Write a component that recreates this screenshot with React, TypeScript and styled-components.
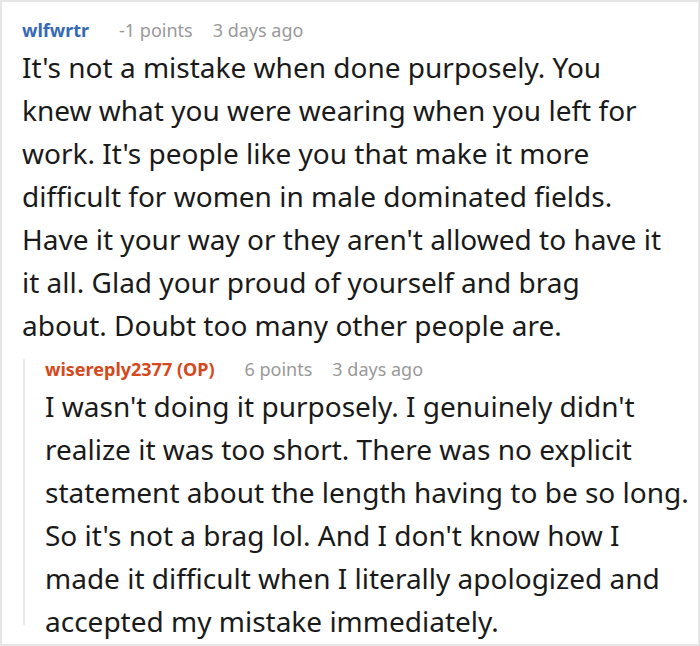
import styled, { createGlobalStyle } from 'styled-components'

const GlobalStyle = createGlobalStyle`
	html, body {
		margin: 0;
		padding: 0;
		background: #ffffff;
	}
	body {
		font-family: 'Noto Sans', 'Open Sans', sans-serif;
	}
`

type CommentData = {
	author: string
	points: string
	time: string
	op?: boolean
	lines: string[]
}

const parent: CommentData = {
	author: 'wlfwrtr',
	points: '-1 points',
	time: '3 days ago',
	lines: [
		"It's not a mistake when done purposely. You",
		'knew what you were wearing when you left for',
		"work. It's people like you that make it more",
		'difficult for women in male dominated fields.',
		"Have it your way or they aren't allowed to have it",
		'it all. Glad your proud of yourself and brag',
		'about. Doubt too many other people are.',
	],
}

const reply: CommentData = {
	author: 'wisereply2377 (OP)',
	points: '6 points',
	time: '3 days ago',
	op: true,
	lines: [
		"I wasn't doing it purposely. I genuinely didn't",
		'realize it was too short. There was no explicit',
		'statement about the length having to be so long.',
		"So it's not a brag lol. And I don't know how I",
		'made it difficult when I literally apologized and',
		'accepted my mistake immediately.',
	],
}

const Comment = ({ data }: { data: CommentData }) => (
	<>
		<StylesMeta>
			<StylesAuthor $op={data.op}>{data.author}</StylesAuthor>
			<StylesInfo>{data.points}</StylesInfo>
			<StylesInfo>{data.time}</StylesInfo>
		</StylesMeta>
		<StylesBody>
			{data.lines.map((line) => (
				<StylesLine key={line}>{line}</StylesLine>
			))}
		</StylesBody>
	</>
)

export default function App() {
	return (
		<>
			<GlobalStyle />
			<StylesFrame>
				<Comment data={parent} />
				<StylesReply>
					<Comment data={reply} />
				</StylesReply>
			</StylesFrame>
		</>
	)
}

const StylesFrame = styled.section`
	box-sizing: border-box;
	width: 700px;
	height: 646px;
	border: 2px solid #e6e6e6;
	padding: 14px 4px 0 20px;
	overflow: hidden;
`
const StylesMeta = styled.div`
	display: flex;
	align-items: baseline;
	gap: 20px;
	height: 30px;
	font-size: 18px;
	line-height: 28px;
`
const StylesAuthor = styled.span<{ $op?: boolean }>`
	margin-right: 10px;
	font-weight: 700;
	color: ${(p) => (p.$op ? '#d5481b' : '#3669b5')};
`
const StylesInfo = styled.span`
	color: #999999;
`
const StylesBody = styled.p`
	margin: 0;
	font-size: 28px;
	line-height: 43px;
	color: #1a1a1a;
`
const StylesLine = styled.span`
	display: block;
	white-space: nowrap;
`
const StylesReply = styled.div`
	position: relative;
	margin-top: 8px;
	padding-left: 22px;
	margin-left: 1px;

	&::before {
		content: '';
		position: absolute;
		left: 0;
		top: 4px;
		bottom: 18px;
		width: 2px;
		background: #e8e8e8;
	}
`
